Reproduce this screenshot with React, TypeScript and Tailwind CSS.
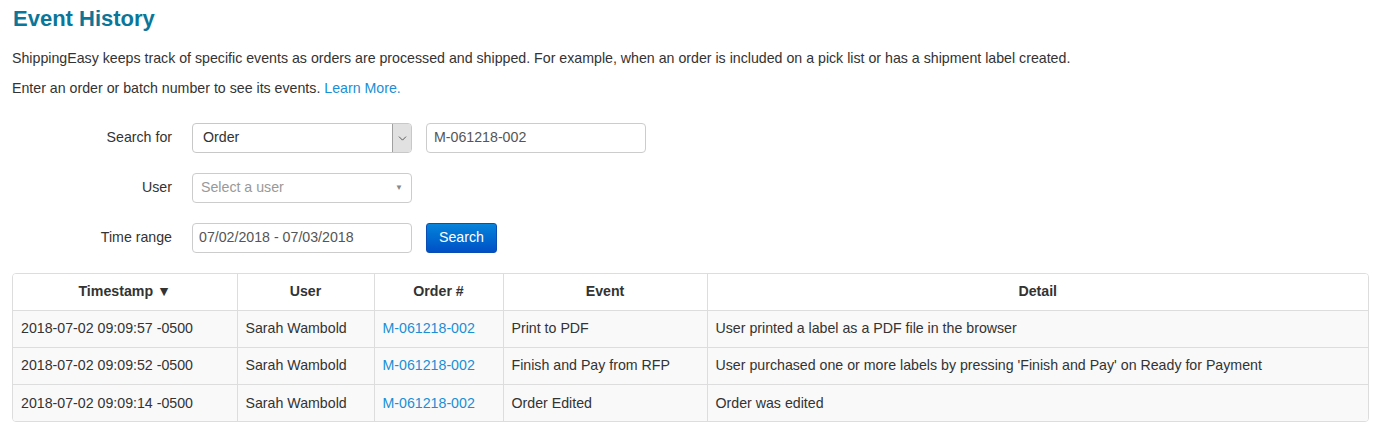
import { ChevronDown } from "lucide-react";

const rows = [
  {
    time: "2018-07-02 09:09:57 -0500",
    user: "Sarah Wambold",
    order: "M-061218-002",
    event: "Print to PDF",
    detail: "User printed a label as a PDF file in the browser",
  },
  {
    time: "2018-07-02 09:09:52 -0500",
    user: "Sarah Wambold",
    order: "M-061218-002",
    event: "Finish and Pay from RFP",
    detail: "User purchased one or more labels by pressing 'Finish and Pay' on Ready for Payment",
  },
  {
    time: "2018-07-02 09:09:14 -0500",
    user: "Sarah Wambold",
    order: "M-061218-002",
    event: "Order Edited",
    detail: "Order was edited",
  },
];

function FormRow({ label, children }: { label: string; children: React.ReactNode }) {
  return (
    <div className="flex items-center h-[30px]">
      <label className="w-[180px] pr-[20px] text-right text-[#333]">{label}</label>
      <div className="flex items-center gap-[14px]">{children}</div>
    </div>
  );
}

export default function App() {
  return (
    <div
      className="bg-white text-[#333] text-[14.2px] px-[12px] pt-[5px] w-[1380px] h-[436px] overflow-hidden"
      style={{ fontFamily: '"Liberation Sans", Arial, sans-serif' }}
    >
      <h1 className="text-[22px] font-bold text-[#0b7699] leading-[28px] ml-[1px]">Event History</h1>

      <p className="leading-[20px] mt-[15px]">
        ShippingEasy keeps track of specific events as orders are processed and shipped. For example, when an order is
        included on a pick list or has a shipment label created.
      </p>
      <p className="leading-[20px] mt-[10px]">
        Enter an order or batch number to see its events.{" "}
        <a className="text-[#1a8fd6]" href="#">
          Learn More.
        </a>
      </p>

      <div className="flex flex-col gap-[20px] mt-[25px]">
        <FormRow label="Search for">
          <div className="relative flex items-center w-[220px] h-[30px] border border-[#c8c8c8] rounded-[4px] bg-white">
            <span className="pl-[10px]">Order</span>
            <span className="absolute right-0 top-0 bottom-0 w-[19px] flex items-center justify-center bg-[#e1e1e1] border-l border-[#a0a0a0] rounded-r-[3px]">
              <ChevronDown size={13} strokeWidth={1.6} className="text-[#444]" />
            </span>
          </div>
          <div className="flex items-center w-[220px] h-[30px] border border-[#ccc] rounded-[4px] bg-white pl-[7px] text-[#555]">
            M-061218-002
          </div>
        </FormRow>

        <FormRow label="User">
          <div className="flex items-center justify-between w-[220px] h-[30px] border border-[#ccc] rounded-[4px] bg-white pl-[8px] pr-[8px]">
            <span className="text-[#999]">Select a user</span>
            <span className="text-[8px] text-[#888]">▼</span>
          </div>
        </FormRow>

        <FormRow label="Time range">
          <div className="flex items-center w-[220px] h-[30px] border border-[#ccc] rounded-[4px] bg-white pl-[6px] text-[#555]">
            07/02/2018 - 07/03/2018
          </div>
          <button className="h-[30px] w-[71px] rounded-[3px] border border-[#0a4eb4] bg-gradient-to-b from-[#0a83da] to-[#0050c6] text-white">
            Search
          </button>
        </FormRow>
      </div>

      <div className="mt-[20px] w-[1357px] border border-[#ddd] rounded-[4px] overflow-hidden">
        <table className="w-full border-collapse table-fixed">
          <colgroup>
            <col className="w-[224px]" />
            <col className="w-[137px]" />
            <col className="w-[129px]" />
            <col className="w-[204px]" />
            <col />
          </colgroup>
          <thead>
            <tr className="h-[36px] bg-white">
              <th className="font-bold text-center border-r border-[#ddd]">Timestamp ▼</th>
              <th className="font-bold text-center border-r border-[#ddd]">User</th>
              <th className="font-bold text-center border-r border-[#ddd]">Order #</th>
              <th className="font-bold text-center border-r border-[#ddd]">Event</th>
              <th className="font-bold text-center">Detail</th>
            </tr>
          </thead>
          <tbody>
            {rows.map((r) => (
              <tr key={r.time} className="h-[37px] bg-[#f9f9f9] border-t border-[#ddd]">
                <td className="pl-[8px] pt-[1px] border-r border-[#ddd]">{r.time}</td>
                <td className="pl-[8px] pt-[1px] border-r border-[#ddd]">{r.user}</td>
                <td className="pl-[8px] pt-[1px] border-r border-[#ddd]">
                  <a className="text-[#1a8fd6]" href="#">
                    {r.order}
                  </a>
                </td>
                <td className="pl-[8px] pt-[1px] border-r border-[#ddd]">{r.event}</td>
                <td className="pl-[8px] pt-[1px]">{r.detail}</td>
              </tr>
            ))}
          </tbody>
        </table>
      </div>
    </div>
  );
}
